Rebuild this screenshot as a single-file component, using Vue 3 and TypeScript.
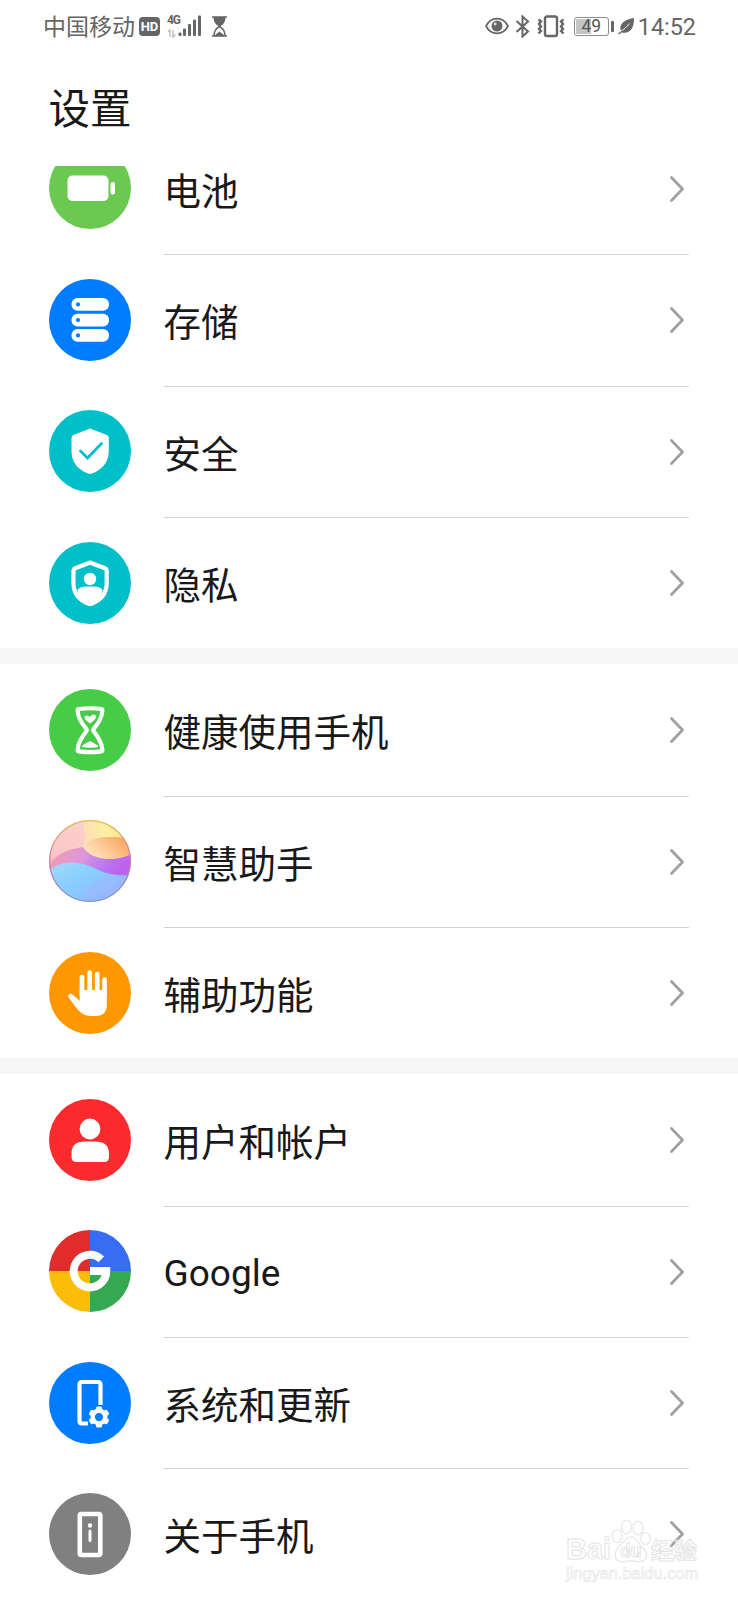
<script setup lang="ts">
interface Item {
  id: string
  label: string
  color: string
}

const groups: Item[][] = [
  [
    { id: 'battery', label: '电池', color: '#6bc850' },
    { id: 'storage', label: '存储', color: '#007dff' },
    { id: 'security', label: '安全', color: '#00bfc9' },
    { id: 'privacy', label: '隐私', color: '#00bfc9' },
  ],
  [
    { id: 'health', label: '健康使用手机', color: '#47cc47' },
    { id: 'assistant', label: '智慧助手', color: '#ffffff' },
    { id: 'access', label: '辅助功能', color: '#ff9800' },
  ],
  [
    { id: 'user', label: '用户和帐户', color: '#fa2a2d' },
    { id: 'google', label: 'Google', color: '#ffffff' },
    { id: 'system', label: '系统和更新', color: '#007dff' },
    { id: 'about', label: '关于手机', color: '#808080' },
  ],
]

const gearTeeth: number[] = [0, 60, 120, 180, 240, 300]
</script>

<template>
  <div class="screen">
    <div class="status">
      <div class="status-left">
        <span class="carrier">中国移动</span>
        <span class="hd">HD</span>
        <span class="net">
          <span class="gen">4G</span>
          <svg width="10" height="9" viewBox="0 0 10 9" fill="none" stroke="#bdbdbd" stroke-width="1.4">
            <path d="M1 3L3 1V8M6 1V8L8.5 5.5" />
          </svg>
        </span>
        <svg class="signal" width="24" height="22" viewBox="0 0 24 22" fill="#666">
          <rect x="0.5" y="17.5" width="3" height="3.5" rx="1" />
          <rect x="5" y="13.5" width="3" height="7.5" rx="1" />
          <rect x="10" y="9" width="3" height="12" rx="1" />
          <rect x="15" y="4.5" width="3" height="16.5" rx="1" />
          <rect x="20" y="0.5" width="3" height="20.5" rx="1" />
        </svg>
        <svg class="sand" width="17" height="21" viewBox="0 0 17 21">
          <path d="M1 1H16M1 20H16" stroke="#666" stroke-width="1.600" />
          <path d="M2.500 1H14.500C14.500 6 12.500 8 9.300 10.500H7.700C4.500 8 2.500 6 2.500 1Z" fill="#666" />
          <path d="M8.500 10.500C4.500 13 3.200 15 3 20M8.500 10.500C12.500 13 13.800 15 14 20" fill="none" stroke="#666" stroke-width="1.500" />
          <path d="M3.500 20C5 17.500 7 17 8.500 15.500C10 17 12 17.500 13.500 20Z" fill="#666" />
        </svg>
      </div>
      <div class="status-right">
        <svg width="24" height="18" viewBox="0 0 24 18">
          <path d="M1 9C6 -.8 18 -.8 23 9C18 18.800 6 18.800 1 9Z" fill="none" stroke="#666" stroke-width="1.700" />
          <circle cx="12" cy="9" r="5.500" fill="#666" />
          <circle cx="10.200" cy="7" r="1.400" fill="#ddd" />
        </svg>
        <svg class="bt" width="15" height="23" viewBox="0 0 15 23">
          <path d="M1.500 6L13 16.500L7.500 21.500V1.500L13 6.500L1.500 17" fill="none" stroke="#666" stroke-width="2" />
        </svg>
        <svg class="vib" width="28" height="23" viewBox="0 0 28 23" fill="none" stroke="#666">
          <rect x="8" y="1.500" width="12" height="19.500" rx="2" stroke-width="2.400" />
          <path d="M1.500 4.500L4 6.500L2 9L4 11.500L2 14L4 16L1.500 18.500M26.500 4.500L24 6.500L26 9L24 11.500L26 14L24 16L26.500 18.500" stroke-width="2.400" />
        </svg>
        <span class="power">49</span>
        <span class="cap"></span>
        <svg class="leaf" width="17" height="18" viewBox="0 0 17 18">
          <path d="M16 1C16 10 13 17 4 15.500C-1 8 6 2.500 16 1Z" fill="#666" />
          <path d="M2.500 14.500C6 12.500 8.500 10 11.500 6.500" stroke="#fff" stroke-width="0.900" fill="none" />
          <path d="M.5 17L3.800 14.500" stroke="#666" stroke-width="1.500" />
        </svg>
        <span class="time">14:52</span>
      </div>
    </div>

    <h1 class="title">设置</h1>

    <main class="list">
      <section v-for="(group, g) in groups" :key="g" class="group">
        <div v-for="item in group" :key="item.id" class="row">
          <svg class="icon" viewBox="0 0 82 82">
            <circle cx="41" cy="41" r="41" :fill="item.color" />

            <g v-if="item.id === 'battery'" fill="#fff">
              <rect x="18.500" y="28.500" width="41" height="25.500" rx="5" />
              <rect x="61.500" y="35" width="4.500" height="12.500" rx="2" />
            </g>

            <g v-else-if="item.id === 'storage'">
              <g v-for="y in [19, 34.700, 50]" :key="y">
                <rect x="22.500" :y="y" width="37.500" height="12.800" rx="6" fill="#fff" />
                <circle cx="29" :cy="y + 6.400" r="2.100" fill="#007dff" />
              </g>
            </g>

            <g v-else-if="item.id === 'security'">
              <path d="M41 18.500Q42 18.500 43.500 19.400L58 25Q59.800 26 59.800 28V41C59.800 53 52 60 43.500 63.300Q41 64.300 38.500 63.300C30 60 22.500 53 22.500 41V28Q22.500 26 24.300 25L38.500 19.400Q40 18.500 41 18.500Z" fill="#fff" />
              <path d="M31.500 41L38.500 48L52.500 33.500" fill="none" stroke="#00bfc9" stroke-width="2.800" stroke-linecap="round" />
            </g>

            <g v-else-if="item.id === 'privacy'">
              <path d="M41 20.500L56.500 26.500Q57.700 27 57.700 28.500V41C57.700 52 50.500 58.500 43 61.500Q41 62.300 39 61.500C31.500 58.500 24.500 52 24.500 41V28.500Q24.500 27 25.700 26.500Z" fill="none" stroke="#fff" stroke-width="4.200" />
              <circle cx="41" cy="37" r="6.200" fill="#fff" />
              <path d="M28.500 48C31 44.500 35 44.500 41 44.500S51 44.500 53.500 48C53 55 46 60.500 41 62.500C36 60.500 29 55 28.500 48Z" fill="#fff" />
            </g>

            <g v-else-if="item.id === 'health'">
              <path d="M29.500 20Q41 18.500 52.500 20Q53.500 20.200 53.400 21.500C53 30 48.500 35.500 44.500 40Q43.700 41 44.500 42C48.500 47 53 53 53.400 61Q53.500 62 52.500 62.300Q41 64 29.500 62.300Q28.500 62 28.600 61C29 53 33.500 47 37.500 42Q38.300 41 37.500 40C33.500 35.500 29 30 28.600 21.500Q28.500 20.200 29.500 20Z" fill="none" stroke="#fff" stroke-width="4.200" />
              <path d="M41 34.500C36 31 34.500 28.500 36 27Q38.500 25.500 41 28Q43.500 24.500 46.500 26C48 28.500 46 31 41 34.500Z" fill="#fff" />
              <path d="M33 58Q32.800 57 34 56L39.500 52.700Q41 52 42.500 52.700L48 56Q49.200 57 49 58Q41 59.500 33 58Z" fill="#fff" />
            </g>

            <g v-else-if="item.id === 'assistant'">
              <defs>
                <linearGradient id="sky" x1="0" y1="0.300" x2="1" y2="0">
                  <stop offset="0" stop-color="#f9b9b4" />
                  <stop offset="0.400" stop-color="#fcdcb8" />
                  <stop offset="0.700" stop-color="#fdf0a0" />
                  <stop offset="1" stop-color="#fbd070" />
                </linearGradient>
                <linearGradient id="sun" x1="0" y1="0.500" x2="1" y2="0">
                  <stop offset="0" stop-color="#fde0b8" />
                  <stop offset="0.500" stop-color="#fcc088" />
                  <stop offset="1" stop-color="#f99a50" />
                </linearGradient>
                <linearGradient id="wave" x1="0" y1="0" x2="1" y2="0.250">
                  <stop offset="0" stop-color="#f2a0a8" />
                  <stop offset="0.450" stop-color="#dd96dc" />
                  <stop offset="0.750" stop-color="#b878f4" />
                  <stop offset="1" stop-color="#bd62ea" />
                </linearGradient>
                <linearGradient id="sea" x1="0" y1="0" x2="0.900" y2="0.800">
                  <stop offset="0" stop-color="#a5d8fa" />
                  <stop offset="0.450" stop-color="#88d0ff" />
                  <stop offset="1" stop-color="#8fb4fd" />
                </linearGradient>
                <linearGradient id="rim" x1="0" y1="0" x2="0" y2="1">
                  <stop offset="0" stop-color="#e2bb5c" />
                  <stop offset="0.500" stop-color="#cc7ba4" />
                  <stop offset="1" stop-color="#809ad0" />
                </linearGradient>
                <clipPath id="orb"><circle cx="41" cy="41" r="41" /></clipPath>
              </defs>
              <g clip-path="url(#orb)">
                <rect width="82" height="82" fill="url(#sky)" />
                <path d="M0 0H33C37 12 36 22 34 27C28 32 20 30 12 34L0 40Z" fill="#fbc9cf" opacity="0.750" />
                <path d="M0 46C7 34 18 29 34 27C42 40 62 42 82 34V62H0Z" fill="url(#wave)" />
                <path d="M35 25C44 17 60 15 82 19V34C70 41 44 42 35 25Z" fill="url(#sun)" />
                <path d="M0 50C12 41 26 41 38 45C52 51 62 57 82 55V82H0Z" fill="url(#sea)" />
                <path d="M28 82C40 74 40 58 62 54L82 55V82Z" fill="#a8b4ff" opacity="0.350" />
              </g>
              <circle cx="41" cy="41" r="40.400" fill="none" stroke="url(#rim)" stroke-width="1.200" />
            </g>

            <g v-else-if="item.id === 'access'">
              <path d="M33 43V25M40.700 38V20.500M48.200 38V22M55.500 43V27.500M21.500 44L33 54" fill="none" stroke="#fff" stroke-width="4.700" stroke-linecap="round" />
              <path d="M30.700 38H57.800V53C57.800 60 54 64 47 64H42C35 64 29 59 26 54L20 46L24 43L30.700 49Z" fill="#fff" />
            </g>

            <g v-else-if="item.id === 'user'" fill="#fff">
              <circle cx="41" cy="30" r="10.400" />
              <path d="M22.500 55C22.500 46 27 42.500 36 42.500H46C55 42.500 60 46 60 55V58Q60 63 55 63H27.500Q22.500 63 22.500 58Z" />
            </g>

            <g v-else-if="item.id === 'google'">
              <path d="M41 41V0A41 41 0 0 0 0 41Z" fill="#e02d2b" />
              <path d="M41 41V0A41 41 0 0 1 82 41Z" fill="#396df1" />
              <path d="M41 41H82A41 41 0 0 1 41 82Z" fill="#36a852" />
              <path d="M41 41H0A41 41 0 0 0 41 82Z" fill="#fbbd07" />
              <path d="M52.300 29.300A16.300 16.300 0 1 0 57.300 41H41" fill="none" stroke="#fff" stroke-width="8" />
            </g>

            <g v-else-if="item.id === 'system'">
              <path d="M51.500 43V22.500Q51.500 20 49 20H33Q30.500 20 30.500 22.500V59Q30.500 61.500 33 61.500H39" fill="none" stroke="#fff" stroke-width="4.200" />
              <g transform="translate(50 55)">
                <circle r="10.500" fill="#007dff" />
                <rect v-for="a in gearTeeth" :key="a" x="-3" y="-10.500" width="6" height="6" rx="1.500" fill="#fff" :transform="`rotate(${a})`" />
                <circle r="6.300" fill="none" stroke="#fff" stroke-width="4.400" />
              </g>
            </g>

            <g v-else>
              <rect x="30.800" y="21" width="20.500" height="41" rx="1.500" fill="none" stroke="#fff" stroke-width="4.600" />
              <circle cx="41" cy="32.500" r="2.200" fill="#fff" />
              <path d="M41 38V47.500" stroke="#fff" stroke-width="3" stroke-linecap="round" />
            </g>
          </svg>
          <div class="content">
            <span class="label" :class="{ latin: item.id === 'google' }">{{ item.label }}</span>
            <svg class="chevron" width="18" height="30" viewBox="0 0 18 30">
              <path d="M3.500 3.500L14.500 15L3.500 26.500" fill="none" stroke="#a0a0a0" stroke-width="2.800" stroke-linecap="round" stroke-linejoin="round" />
            </svg>
          </div>
        </div>
      </section>
    </main>

    <div class="watermark">
      <div class="brand">
        <span class="mark">Bai</span>
        <span class="paw">
          <svg width="40" height="44" viewBox="0 0 40 44" fill="#fff" stroke="#dedede" stroke-width="1.200">
            <ellipse cx="6" cy="17" rx="4.700" ry="6.500" />
            <ellipse cx="15.500" cy="8" rx="5" ry="6.800" />
            <ellipse cx="27" cy="9" rx="5" ry="6.800" />
            <ellipse cx="34.500" cy="19.500" rx="4.700" ry="6" />
            <path d="M20 18C26 18 27 25 32 29C39 36 34 43.500 27 42.500C22 41.500 18 41.500 13 42.500C5 43.500 1 36 7 29C12 25 14 18 20 18Z" />
          </svg>
          <span class="du">du</span>
        </span>
        <span class="mark cn">经验</span>
      </div>
      <div class="site">jingyan.baidu.com</div>
    </div>
  </div>
</template>

<style>
body {
  background: #fff;
}
</style>

<style scoped>
.screen {
  position: relative;
  width: 738px;
  height: 1600px;
  overflow: hidden;
  background: #fff;
  font-family: Roboto, "Noto Sans CJK SC", sans-serif;
  color: #191919;
  display: flex;
  flex-direction: column;
}

.status {
  flex: none;
  height: 52px;
  padding: 0 42px 0 43px;
  display: flex;
  align-items: center;
  justify-content: space-between;
  color: #666;
}

.status-left,
.status-right {
  display: flex;
  align-items: center;
}

.carrier {
  font-size: 23px;
  line-height: 30px;
  padding-top: 3px;
  width: 93px;
  white-space: nowrap;
}

.hd {
  margin-left: 3px;
  width: 21px;
  height: 19px;
  border-radius: 4px;
  background: #666;
  color: #fff;
  font-size: 13px;
  line-height: 19px;
  font-weight: 700;
  text-align: center;
}

.net {
  margin-left: 7px;
  width: 11px;
  height: 24px;
  display: flex;
  flex-direction: column;
  justify-content: space-between;
}

.gen {
  font-size: 12px;
  line-height: 12px;
  font-weight: 700;
  letter-spacing: -1.2px;
  white-space: nowrap;
}

.signal {
  margin-bottom: 1px;
}

.sand {
  margin-left: 9px;
}

.bt {
  margin-left: 6px;
}

.vib {
  margin-left: 7px;
}

.power {
  box-sizing: border-box;
  margin-left: 9px;
  width: 35px;
  height: 19px;
  border: 1.5px solid #8c8c8c;
  border-radius: 3px;
  background: linear-gradient(90deg, #c4c4c4 0 48%, #fff 48%);
  background-clip: content-box;
  padding: 1px;
  font-size: 17.5px;
  line-height: 15px;
  text-align: center;
  color: #555;
}

.cap {
  margin-left: 2px;
  width: 3px;
  height: 11px;
  border-radius: 1px;
  background: #666;
}

.leaf {
  margin-left: 4px;
}

.time {
  margin-left: 3px;
  padding-top: 1px;
  font-size: 23.4px;
  line-height: 30px;
}

.title {
  flex: none;
  margin: 0;
  height: 114px;
  padding: 35px 0 0 48.5px;
  box-sizing: border-box;
  font-size: 41.5px;
  line-height: 46px;
  font-weight: 400;
}

.list {
  flex: 1;
  min-height: 0;
  overflow: hidden;
  display: flex;
  flex-direction: column;
}

.group {
  flex: none;
}

.group:first-child {
  margin-top: -43.2px;
}

.group + .group {
  border-top: 16px solid #f6f6f6;
}

.row {
  height: 131.350px;
  padding: 0 49px;
  display: flex;
  align-items: center;
  gap: 33px;
}

.icon {
  flex: none;
  width: 82px;
  height: 82px;
}

.content {
  flex: 1;
  align-self: stretch;
  box-sizing: border-box;
  margin-bottom: -1px;
  padding: 1px 3px 0 0;
  display: flex;
  align-items: center;
  justify-content: space-between;
  border-bottom: 1px solid #d4d4d4;
}

.row:last-child .content {
  margin-bottom: 0;
  border-bottom: 0;
}

.label {
  font-size: 37.500px;
  line-height: 50px;
  padding-top: 6px;
  margin-left: -0.5px;
}

.label.latin {
  font-size: 37px;
  padding-top: 5px;
}

.watermark {
  position: absolute;
  left: 566px;
  top: 1519px;
  width: 140px;
  opacity: 0.75;
}

.brand {
  display: flex;
  align-items: flex-end;
  height: 44px;
}

.mark {
  width: 45px;
  font-family: "Liberation Sans", sans-serif;
  font-size: 29px;
  line-height: 27px;
  font-weight: 700;
  color: #fff;
  -webkit-text-stroke: 1px #dcdcdc;
}

.paw {
  position: relative;
  width: 40px;
  height: 44px;
}

.du {
  position: absolute;
  left: 9px;
  top: 22px;
  font-size: 19px;
  line-height: 20px;
  font-weight: 700;
  color: #fff;
  -webkit-text-stroke: 1px #dcdcdc;
}

.cn {
  font-family: "Noto Sans CJK SC", sans-serif;
  font-size: 23px;
  white-space: nowrap;
}

.site {
  font-family: "Liberation Sans", sans-serif;
  font-size: 16.4px;
  line-height: 21px;
  color: #fff;
  -webkit-text-stroke: 0.7px #e0e0e0;
}
</style>
